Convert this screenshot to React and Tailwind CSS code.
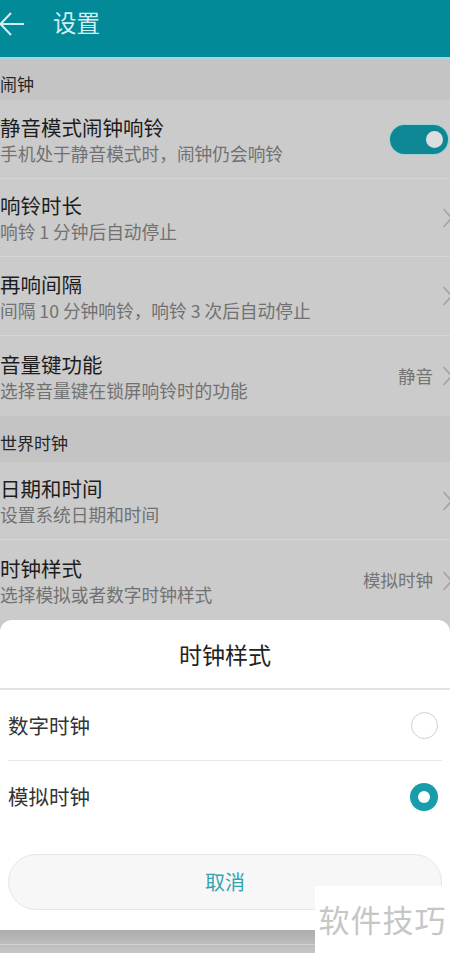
import React from "react";

const font = { fontFamily: '"Noto Sans CJK SC", "Noto Sans", sans-serif' };

function Chevron() {
    return (
        <svg width="11" height="22" viewBox="0 0 11 22" className="mr-[-3px] shrink-0">
            <path d="M1.5 2 L9.5 11 L1.5 20" fill="none" stroke="#a3a3a3" strokeWidth="1.6" />
        </svg>
    );
}

function Toggle() {
    return (
        <div className="relative mr-[2px] h-[29px] w-[58px] rounded-full bg-[#0e8894] ring-1 ring-[#9fd0d4]">
            <div className="absolute right-[3px] top-[4px] h-[21px] w-[21px] rounded-full border-2 border-[#0e8894] bg-[#dedede]" />
        </div>
    );
}

function SectionHeader({ children, h }) {
    return (
        <div className={`bg-[#c4c4c4] text-[17px] leading-[25px] text-[#262626] ${h}`}>
            {children}
        </div>
    );
}

function Row({ title, sub, value, right, h = "h-[79px]", last }) {
    return (
        <div className={`flex items-center bg-[#cbcbcb] ${h} ${last ? "" : "border-b border-[#d6d6d6]"}`}>
            <div className="flex flex-1 flex-col">
                <span className="text-[20.5px] leading-[26px] text-[#1d1d1d]">{title}</span>
                <span className="mt-[1px] text-[17.7px] leading-[24px] text-[#717171]">{sub}</span>
            </div>
            {value && <span className="mr-[9px] text-[17.5px] text-[#747474]">{value}</span>}
            {right || <Chevron />}
        </div>
    );
}

export default function App() {
    return (
        <div className="relative h-[953px] w-[450px] overflow-hidden bg-[#c8c8c8]" style={font}>
            {/* app bar */}
            <div className="flex h-[59px] items-start border-b-2 border-[#a9d6da] bg-[#028a99]">
                <svg width="28" height="28" viewBox="0 0 28 28" className="ml-[-2px] mt-[10px]">
                    <path d="M26 14 H3 M13 3 L2.5 14 L13 25" fill="none" stroke="#d3eff1" strokeWidth="2" />
                </svg>
                <span className="ml-[27px] mt-[5px] text-[23.5px] leading-[34px] text-[#d3eff1]">设置</span>
            </div>

            <SectionHeader h="h-[41px] pt-[12px]">闹钟</SectionHeader>
            <Row title="静音模式闹钟响铃" sub="手机处于静音模式时，闹钟仍会响铃" right={<Toggle />} />
            <Row title="响铃时长" sub="响铃 1 分钟后自动停止" h="h-[78px]" />
            <Row title="再响间隔" sub="间隔 10 分钟响铃，响铃 3 次后自动停止" />
            <Row title="音量键功能" sub="选择音量键在锁屏响铃时的功能" value="静音" h="h-[80px]" last />
            <SectionHeader h="h-[46px] pt-[14px]">世界时钟</SectionHeader>
            <Row title="日期和时间" sub="设置系统日期和时间" h="h-[78px]" />
            <Row title="时钟样式" sub="选择模拟或者数字时钟样式" value="模拟时钟" h="h-[81px]" last />

            {/* bottom sheet */}
            <div className="absolute left-0 top-[620px] h-[310px] w-[450px] rounded-t-[12px] bg-white">
                <div className="flex h-[68px] items-center justify-center text-[23px] text-[#222]">
                    时钟样式
                </div>
                <div className="h-[2px] bg-[#e4e4e4]" />
                <div className="px-[8px]">
                    <div className="flex h-[71px] items-center justify-between border-b border-[#e8e8e8]">
                        <span className="text-[20.5px] text-[#333]">数字时钟</span>
                        <div className="mr-[4px] h-[27px] w-[27px] rounded-full border-[1.5px] border-[#cfcfcf]" />
                    </div>
                    <div className="flex h-[71px] items-center justify-between">
                        <span className="text-[20.5px] text-[#333]">模拟时钟</span>
                        <div className="mr-[4px] flex h-[28px] w-[28px] items-center justify-center rounded-full bg-[#1a9dab]">
                            <div className="h-[12px] w-[12px] rounded-full bg-white" />
                        </div>
                    </div>
                    <div className="mt-[22px] flex h-[56px] items-center justify-center rounded-full border border-[#e6e6e6] bg-[#f7f7f7]">
                        <span className="text-[20px] text-[#35a3ae]">取消</span>
                    </div>
                </div>
            </div>

            {/* below sheet */}
            <div className="absolute left-0 top-[930px] h-[23px] w-[450px] bg-gradient-to-b from-[#adadad] to-[#c6c6c6]">
                <div className="mt-[14px] h-[1px] bg-[#d2d2d2]" />
            </div>

            {/* watermark */}
            <div className="absolute left-[315px] top-[886px] flex h-[67px] w-[135px] items-center justify-center bg-white">
                <span className="text-[31px] tracking-[1px] text-[#c6c6c6]">软件技巧</span>
            </div>
        </div>
    );
}
